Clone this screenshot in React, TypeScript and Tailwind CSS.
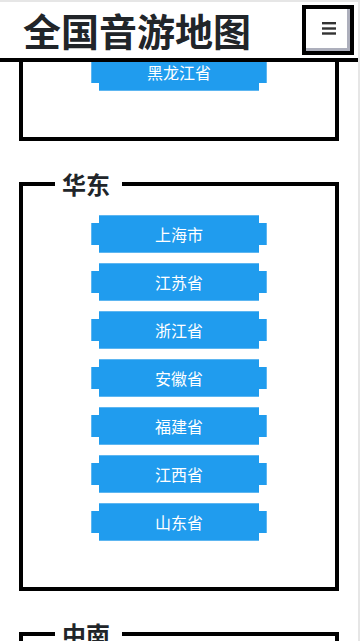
import React from 'react';

type Region = { name: string; provinces: string[] };

const regions: Region[] = [
  { name: '东北', provinces: ['辽宁省', '吉林省', '黑龙江省'] },
  { name: '华东', provinces: ['上海市', '江苏省', '浙江省', '安徽省', '福建省', '江西省', '山东省'] },
  { name: '中南', provinces: ['河南省', '湖北省', '湖南省', '广东省', '广西壮族自治区', '海南省'] },
];

const font = { fontFamily: '"Noto Sans CJK SC", "Noto Sans", sans-serif' };

// 像素风按钮：两侧各有一段缩进的"耳朵"
const PixelButton: React.FC<{ label: string }> = ({ label }) => (
  <button className="flex items-center">
    <span className="w-2 h-[22px] bg-[#209cee] border-l border-[#5db6f1]" />
    <span className="w-[160px] h-[38px] bg-[#209cee] border-y border-[#5db6f1] flex items-center justify-center text-white text-base">
      {label}
    </span>
    <span className="w-2 h-[22px] bg-[#209cee] border-r border-[#5db6f1]" />
  </button>
);

const RegionBox: React.FC<{ region: Region }> = ({ region }) => (
  <fieldset className="border-4 border-black pt-[15px] pb-[46px]">
    <legend className="ml-[32px] pl-[7px] pr-[12px] text-2xl leading-8 font-bold text-[#212529]">
      {region.name}
    </legend>
    <div className="flex flex-col items-center gap-[10px]">
      {region.provinces.map((p) => (
        <PixelButton key={p} label={p} />
      ))}
    </div>
  </fieldset>
);

export default function App() {
  return (
    <div
      className="relative w-[360px] h-[641px] overflow-hidden bg-white border-t-2 border-r-2 border-[#e6e6e6]"
      style={font}
    >
      {/* 固定顶栏，盖在滚动内容之上 */}
      <header className="absolute top-0 left-0 right-0 z-10 h-[60px] bg-white border-b-4 border-black flex items-center justify-between pl-[23px] pr-1">
        <h1 className="text-[38px] leading-none font-bold text-[#212529] tracking-normal">全国音游地图</h1>
        <button className="w-[52px] h-[50px] border-4 border-black bg-white shadow-[inset_-3px_-3px_#adafbc] flex items-center justify-center pb-[3px] pl-[2px]">
          <svg width="14" height="13" viewBox="0 0 14 13">
            <rect x="0" y="0" width="14" height="2.4" fill="#333" />
            <rect x="0" y="5.3" width="14" height="2.4" fill="#333" />
            <rect x="0" y="10.3" width="14" height="2.4" fill="#333" />
          </svg>
        </button>
      </header>

      <main className="-mt-[92px] px-[19px] flex flex-col gap-[27px]">
        {regions.map((r) => (
          <RegionBox key={r.name} region={r} />
        ))}
      </main>
    </div>
  );
}
